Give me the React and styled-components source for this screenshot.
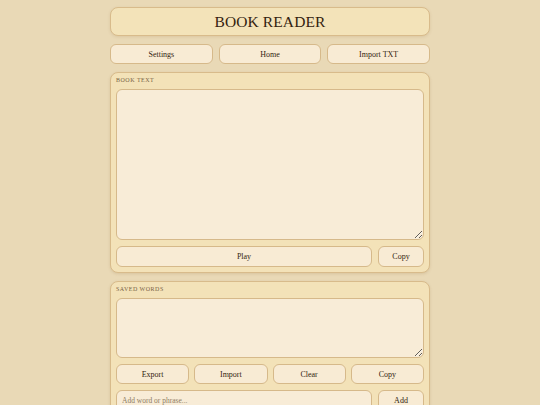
import React, { useState } from 'react'
import styled, { createGlobalStyle } from 'styled-components'

const GlobalStyle = createGlobalStyle`
    * { box-sizing: border-box; }
    html, body {
        margin: 0;
        padding: 0;
        background: #e9d9b6;
        font-family: "Liberation Serif", "DejaVu Serif", serif;
        color: #3b2a18;
    }
`

const Page = styled.div`
    width: 320px;
    margin: 0 auto;
    padding-top: 7px;
    display: flex;
    flex-direction: column;
    gap: 8px;
`

const TitleBar = styled.div`
    height: 29px;
    background: #f3e3b9;
    border: 1px solid #d8bb8b;
    border-radius: 8px;
    box-shadow: 0 1px 3px rgba(140, 100, 50, 0.15);
    display: flex;
    align-items: center;
    justify-content: center;
    font-size: 15.5px;
    letter-spacing: 0.1px;
    color: #33220f;
`

const Nav = styled.div`
    display: grid;
    grid-template-columns: repeat(3, 1fr);
    gap: 6px;
`

const Button = styled.button`
    height: ${p => p.$h || 21}px;
    ${p => p.$w ? `width: ${p.$w}px; flex: none;` : 'flex: 1;'}
    background: #f8ebd4;
    border: 1px solid #d6b98a;
    border-radius: 6px;
    font-family: inherit;
    font-size: 8px;
    color: #33230f;
    padding: 0;
    cursor: pointer;
`

const Panel = styled.section`
    background: #f3e2b8;
    border: 1px solid #d8bb8b;
    border-radius: 8px;
    box-shadow: 0 1px 3px rgba(140, 100, 50, 0.18);
    padding: 5px;
    display: flex;
    flex-direction: column;
    gap: 6px;
`

const Label = styled.div`
    height: 5px;
    line-height: 5px;
    font-size: 6px;
    letter-spacing: 0.5px;
    text-transform: uppercase;
    color: #7a6346;
    white-space: nowrap;
`

const Area = styled.textarea`
    display: block;
    width: 100%;
    height: ${p => p.$h}px;
    background: #f8ecd7;
    border: 1px solid #d6b98a;
    border-radius: 6px;
    resize: vertical;
    font-family: inherit;
    font-size: 8px;
    padding: 5px;
    outline: none;
`

const Row = styled.div`
    display: flex;
    gap: 6px;
`

const Grid4 = styled.div`
    display: grid;
    grid-template-columns: repeat(4, 1fr);
    gap: 5px;
`

const Input = styled.input`
    flex: 1;
    min-width: 0;
    height: 21px;
    background: #f8ecd7;
    border: 1px solid #d6b98a;
    border-radius: 6px;
    font-family: inherit;
    font-size: 7.5px;
    padding: 0 5px;
    color: #3b2a18;
    outline: none;

    &::placeholder { color: #8f7c64; }
`

export default function App() {
    const [text, setText] = useState('')
    const [words, setWords] = useState('')
    const [entry, setEntry] = useState('')

    return (
        <>
            <GlobalStyle />
            <Page>
                <TitleBar>BOOK READER</TitleBar>
                <Nav>
                    <Button $h={20}>Settings</Button>
                    <Button $h={20}>Home</Button>
                    <Button $h={20}>Import TXT</Button>
                </Nav>
                <Panel>
                    <Label>Book Text</Label>
                    <Area $h={151} value={text} onChange={e => setText(e.target.value)} />
                    <Row>
                        <Button>Play</Button>
                        <Button $w={46}>Copy</Button>
                    </Row>
                </Panel>
                <Panel>
                    <Label>Saved Words</Label>
                    <Area $h={60} value={words} onChange={e => setWords(e.target.value)} />
                    <Grid4>
                        <Button $h={20}>Export</Button>
                        <Button $h={20}>Import</Button>
                        <Button $h={20}>Clear</Button>
                        <Button $h={20}>Copy</Button>
                    </Grid4>
                    <Row>
                        <Input placeholder="Add word or phrase..." value={entry} onChange={e => setEntry(e.target.value)} />
                        <Button $w={46}>Add</Button>
                    </Row>
                </Panel>
            </Page>
        </>
    )
}
